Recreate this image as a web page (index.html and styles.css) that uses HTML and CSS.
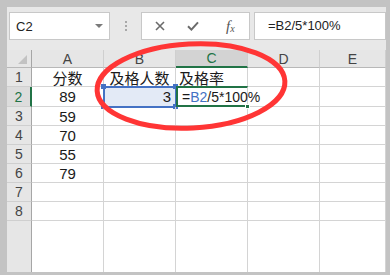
FILE: index.html
```html
<!doctype html>
<html lang="zh-CN">
  <head>
    <meta charset="UTF-8" />
    <meta name="viewport" content="width=device-width, initial-scale=1.0" />
    <title>及格率</title>
    <link rel="stylesheet" href="styles.css">
  </head>
  <body>
    <div class="screen">
      <!-- 编辑栏 -->
      <div class="toolbar">
        <div class="name-box">
          <span class="name-text">C2</span>
          <span class="caret"></span>
        </div>
        <div class="grip"><i></i><i></i><i></i></div>
        <div class="fx-tools">
          <svg class="icon-x" width="10" height="10" viewBox="0 0 10 10">
            <path d="M1 1L9 9M9 1L1 9" stroke="#6b6b6b" stroke-width="1.6" fill="none" />
          </svg>
          <svg class="icon-ok" width="12" height="10" viewBox="0 0 12 10">
            <path d="M1 5.2L4.4 8.6L11 1.4" stroke="#6b6b6b" stroke-width="2" fill="none" />
          </svg>
          <span class="fx">f<sub>x</sub></span>
        </div>
        <div class="formula">=B2/5*100%</div>
      </div>

      <!-- 表格 -->
      <div class="sheet">
        <div class="hd corner"><span class="corner-tri"></span></div>
        <div class="hd col">A</div>
        <div class="hd col">B</div>
        <div class="hd col active">C</div>
        <div class="hd col">D</div>
        <div class="hd col">E</div>

        <div class="hd row">1</div>
        <div class="cell center">分数</div>
        <div class="cell center">及格人数</div>
        <div class="cell">及格率</div>
        <div class="cell"></div>
        <div class="cell"></div>

        <div class="hd row active">2</div>
        <div class="cell center">89</div>
        <div class="cell right ref">3
          <i class="h tl"></i><i class="h tr"></i><i class="h bl"></i><i class="h br"></i>
        </div>
        <div class="cell editing">=<span class="ref-text">B2</span>/5*100%<span class="cursor"></span>
          <i class="fill-handle"></i>
        </div>
        <div class="cell"></div>
        <div class="cell"></div>

        <div class="hd row">3</div>
        <div class="cell center">59</div>
        <div class="cell"></div>
        <div class="cell"></div>
        <div class="cell"></div>
        <div class="cell"></div>

        <div class="hd row">4</div>
        <div class="cell center">70</div>
        <div class="cell"></div>
        <div class="cell"></div>
        <div class="cell"></div>
        <div class="cell"></div>

        <div class="hd row">5</div>
        <div class="cell center">55</div>
        <div class="cell"></div>
        <div class="cell"></div>
        <div class="cell"></div>
        <div class="cell"></div>

        <div class="hd row">6</div>
        <div class="cell center">79</div>
        <div class="cell"></div>
        <div class="cell"></div>
        <div class="cell"></div>
        <div class="cell"></div>

        <div class="hd row">7</div>
        <div class="cell"></div>
        <div class="cell"></div>
        <div class="cell"></div>
        <div class="cell"></div>
        <div class="cell"></div>

        <div class="hd row">8</div>
        <div class="cell"></div>
        <div class="cell"></div>
        <div class="cell"></div>
        <div class="cell"></div>
        <div class="cell"></div>

        <div class="hd row filler"></div>
        <div class="cell filler"></div>
        <div class="cell filler"></div>
        <div class="cell filler"></div>
        <div class="cell filler"></div>
        <div class="cell filler"></div>
      </div>

      <!-- 红圈标注 -->
      <svg class="mark" width="390" height="275" viewBox="0 0 390 275">
        <ellipse cx="191" cy="86" rx="94" ry="42" transform="rotate(-3 191 86)"
          fill="none" stroke="#ff3535" stroke-width="5" />
      </svg>
    </div>
  </body>
</html>
```

FILE: styles.css
```css
* {
  margin: 0;
  padding: 0;
  box-sizing: border-box;
}

body {
  width: 390px;
  height: 275px;
  overflow: hidden;
  background: #c3c3c3;
  font-family: 'Liberation Sans', 'Noto Sans CJK SC', sans-serif;
  color: #1a1a1a;
}

.screen {
  position: relative;
  height: 275px;
  padding: 7px 4px 3px 7px;
  display: flex;
  flex-direction: column;
}

/* 编辑栏 */
.toolbar {
  height: 43px;
  flex: none;
  background: #e8e8e8;
  display: flex;
  align-items: flex-start;
  padding: 5px 0 0 2px;
}

.name-box {
  width: 101px;
  height: 28px;
  background: white;
  border: 1px solid #c8c8c8;
  display: flex;
  align-items: center;
  justify-content: space-between;
  padding: 0 6px;
}

.name-text {
  font-size: 13px;
  color: #222;
}

.caret {
  width: 0;
  height: 0;
  border-left: 4px solid transparent;
  border-right: 4px solid transparent;
  border-top: 4px solid #7a7a7a;
}

.grip {
  width: 31px;
  height: 28px;
  display: flex;
  flex-direction: column;
  align-items: center;
  justify-content: center;
  gap: 2px;
}

.grip i {
  width: 2px;
  height: 2px;
  background: #a8a8a8;
}

.fx-tools {
  width: 109px;
  height: 28px;
  background: white;
  border: 1px solid #c8c8c8;
  display: flex;
  align-items: center;
  padding-left: 13px;
}

.icon-ok {
  margin-left: 22px;
}

.fx {
  margin-left: 27px;
  font-family: 'Liberation Serif', serif;
  font-style: italic;
  font-size: 15px;
  color: #555;
}

.fx sub {
  font-size: 10px;
  vertical-align: -1px;
}

.formula {
  flex: 1;
  height: 28px;
  margin-left: 4px;
  background: white;
  border: 1px solid #c8c8c8;
  padding-left: 13px;
  font-size: 13px;
  line-height: 26px;
  color: #222;
}

/* 表格 */
.sheet {
  flex: 1;
  background: white;
  display: grid;
  grid-template-columns: 25px 72px 72px 72px 72px 1fr;
  grid-template-rows: 18px 19px 20px 19px 19px 19px 19px 19px 19px 1fr;
}

.hd {
  background: #e6e6e6;
  color: #444;
  font-size: 14px;
  display: flex;
  align-items: center;
  justify-content: center;
}

.hd.col {
  border-right: 1px solid #cfcfcf;
  border-bottom: 1px solid #b8b8b8;
}

.hd.col.active {
  background: #d3d3d3;
  color: #217346;
  border-bottom: 2px solid #217346;
}

.hd.row {
  border-right: 1px solid #a6a6a6;
  border-bottom: 1px solid #cfcfcf;
}

.hd.row.active {
  background: #dcdcdc;
  color: #217346;
  border-right: 2px solid #217346;
}

.hd.row.filler {
  border-bottom: none;
}

.corner {
  position: relative;
  border-right: 1px solid #a6a6a6;
  border-bottom: 1px solid #b8b8b8;
}

.corner-tri {
  position: absolute;
  right: 4px;
  bottom: 3px;
  width: 0;
  height: 0;
  border-left: 9px solid transparent;
  border-bottom: 9px solid #c2c2c2;
}

.cell {
  position: relative;
  border-right: 1px solid #d4d4d4;
  border-bottom: 1px solid #d4d4d4;
  font-size: 15px;
  display: flex;
  align-items: center;
  padding: 0 3px;
  white-space: nowrap;
}

.cell.center {
  justify-content: center;
}

.cell.right {
  justify-content: flex-end;
}

.cell.filler {
  border-bottom: none;
}

/* 引用单元格 B2 */
.cell.ref {
  background: #e3eaf6;
  outline: 2px solid #4472c4;
  outline-offset: -1px;
  padding-right: 4px;
}

.h {
  position: absolute;
  width: 5px;
  height: 5px;
  background: #4472c4;
}

.h.tl { left: -3px; top: -3px; }
.h.tr { right: -3px; top: -3px; }
.h.bl { left: -3px; bottom: -3px; }
.h.br { right: -3px; bottom: -3px; }

/* 编辑中的 C2 */
.cell.editing {
  z-index: 2;
  font-size: 14px;
  padding-left: 4px;
  border-top: 2px solid #217346;
  border-left: 2px solid #217346;
  border-bottom: 2px solid #217346;
  margin-top: -1px;
  overflow: visible;
}

.ref-text {
  color: #4472c4;
}

.cursor {
  display: inline-block;
  width: 1px;
  height: 15px;
  margin-left: 1px;
  background: #111;
}

.fill-handle {
  position: absolute;
  right: -3px;
  bottom: -4px;
  width: 5px;
  height: 5px;
  background: #217346;
  border: 1px solid white;
}

/* 红圈 */
.mark {
  position: absolute;
  left: 0;
  top: 0;
  pointer-events: none;
  z-index: 5;
}
```
